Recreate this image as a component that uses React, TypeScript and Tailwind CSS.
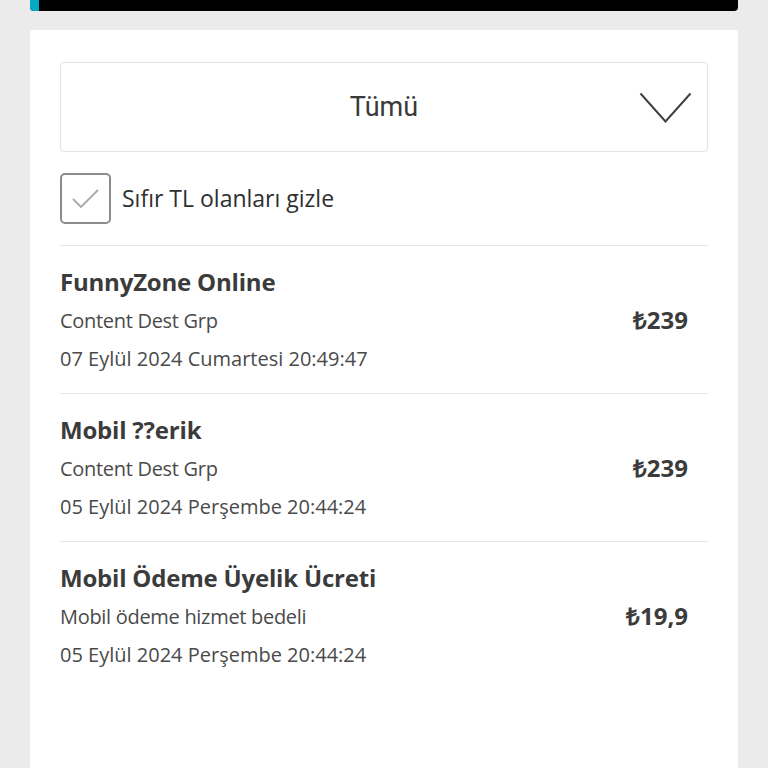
import { useState } from 'react';

const items = [
  {
    title: 'FunnyZone Online',
    subtitle: 'Content Dest Grp',
    date: '07 Eylül 2024 Cumartesi 20:49:47',
    amount: '₺239',
  },
  {
    title: 'Mobil ??erik',
    subtitle: 'Content Dest Grp',
    date: '05 Eylül 2024 Perşembe 20:44:24',
    amount: '₺239',
  },
  {
    title: 'Mobil Ödeme Üyelik Ücreti',
    subtitle: 'Mobil ödeme hizmet bedeli',
    date: '05 Eylül 2024 Perşembe 20:44:24',
    amount: '₺19,9',
  },
];

export default function App() {
  const [hideZero, setHideZero] = useState(true);

  return (
    <div className="min-h-[768px] h-[768px] overflow-hidden bg-[#ebebeb] px-[30px] font-['Open_Sans',sans-serif]">
      {/* Top bar */}
      <div className="flex h-[11px] overflow-hidden rounded-b-[4px] bg-black">
        <div className="w-[9px] bg-[#06a9c2]" />
      </div>

      {/* Card */}
      <div className="mt-[19px] h-[760px] rounded-t-[3px] bg-white px-[30px] pt-[32px]">
        <button className="relative flex h-[90px] w-full items-center justify-center rounded-[4px] border border-[#e3e3e3] bg-white">
          <span className="font-['Roboto',sans-serif] text-[27px] text-[#3a3a3a]">Tümü</span>
          <svg
            className="absolute right-[15px] top-[29px]"
            width="53"
            height="32"
            viewBox="0 0 53 32"
            fill="none"
          >
            <polyline points="1.5,1.5 26.5,29.5 51.5,1.5" stroke="#3f3f3f" strokeWidth="2" strokeLinejoin="miter" />
          </svg>
        </button>

        <label className="mt-[21px] flex cursor-pointer items-center gap-[11px]">
          <button
            type="button"
            onClick={() => setHideZero(!hideZero)}
            className="flex h-[51px] w-[51px] items-center justify-center rounded-[5px] border-2 border-[#8c8c8c] bg-white"
          >
            {hideZero && (
              <svg width="30" height="24" viewBox="0 0 30 24" fill="none">
                <polyline points="2,12 10,20 27,3" stroke="#a9a9a9" strokeWidth="1.8" />
              </svg>
            )}
          </button>
          <span className="text-[23px] text-[#2f2f2f]">Sıfır TL olanları gizle</span>
        </label>

        <div className="mt-[21px]">
          {items.map((item, i) => (
            <div key={i} className="flex items-center justify-between border-t border-[#e6e6e6] pt-[20px] pb-[19px] pr-[20px]">
              <div className="flex flex-col">
                <span className="text-[24px] font-bold leading-[32px] tracking-[-0.2px] text-[#3b3b3b]">{item.title}</span>
                <span className="text-[20px] leading-[46px] tracking-[-0.3px] text-[#4a4a4a]">{item.subtitle}</span>
                <span className="text-[20px] leading-[30px] text-[#4a4a4a]">{item.date}</span>
              </div>
              <span className="text-[24px] font-bold text-[#3b3b3b]">{item.amount}</span>
            </div>
          ))}
        </div>
      </div>
    </div>
  );
}
